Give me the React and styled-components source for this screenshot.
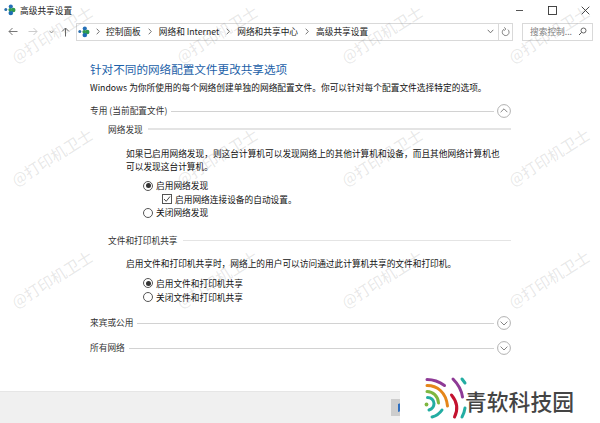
import React from 'react';
import styled, { createGlobalStyle } from 'styled-components';

const GlobalStyle = createGlobalStyle`
  html, body {
    margin: 0;
    padding: 0;
    background: #fff;
  }
  * {
    box-sizing: border-box;
  }
`;

const Window = styled.div`
  position: relative;
  width: 600px;
  height: 423px;
  overflow: hidden;
  background: #fff;
  color: #1a1a1a;
  font-family: "Noto Sans CJK SC", "Noto Sans", sans-serif;
  font-size: 8.7px;
  display: flex;
  flex-direction: column;
`;

const TitleBar = styled.div`
  height: 20px;
  display: flex;
  align-items: center;
  padding: 0 0 0 4px;
`;

const WindowTitle = styled.span`
  margin-left: 4px;
  font-size: 8.7px;
  color: #222;
`;

const WindowButtons = styled.div`
  margin-left: auto;
  margin-right: -2px;
  display: flex;
  align-items: center;
`;

const WindowButton = styled.div`
  width: 33px;
  height: 18px;
  display: flex;
  align-items: center;
  justify-content: center;
`;

const NavBar = styled.div`
  height: 21px;
  margin-top: 1px;
  display: flex;
  align-items: center;
  padding-left: 7px;
`;

const NavIcon = styled.div`
  width: ${p => p.$w}px;
  height: 20px;
  display: flex;
  align-items: center;
  justify-content: center;
`;

const AddressBox = styled.div`
  width: 437px;
  height: 18px;
  border: 1px solid #d9d9d9;
  display: flex;
  align-items: center;
  padding-left: 1px;
`;

const Crumb = styled.span`
  color: #222;
  white-space: nowrap;
`;

const CrumbSep = styled.span`
  width: ${p => p.$w || 18}px;
  display: flex;
  justify-content: center;
`;

const AddressRight = styled.div`
  margin-left: auto;
  display: flex;
  align-items: center;
  height: 100%;
`;

const AddressButton = styled.div`
  width: ${p => p.$w}px;
  height: 100%;
  display: flex;
  align-items: center;
  justify-content: center;
  border-left: ${p => (p.$divider ? '1px solid #d9d9d9' : 'none')};
`;

const SearchBox = styled.div`
  margin-left: 9px;
  width: 71px;
  height: 18px;
  border: 1px solid #d9d9d9;
  display: flex;
  align-items: center;
  justify-content: space-between;
  padding: 0 5px 0 7px;
  color: #808080;
`;

const Content = styled.div`
  flex: 1;
  padding: 17px 0 0 90px;
`;

const MainHeading = styled.div`
  color: #1c5fa8;
  font-size: 11.6px;
  line-height: 20px;
`;

const Intro = styled.div`
  margin-top: 2px;
  line-height: 14px;
  white-space: nowrap;
  color: #111;
  letter-spacing: 0.03px;
`;

const SectionRow = styled.div`
  display: flex;
  align-items: center;
  height: 20px;
  width: 421px;
  margin-top: ${p => p.$top}px;
`;

const SectionLabel = styled.span`
  white-space: nowrap;
  color: #333;
  margin: 0 4px 2px 0;
`;

const SectionLine = styled.div`
  flex: 1;
  height: 1px;
  background: #d2d2d2;
`;

const Chevron = styled.div`
  width: 14px;
  height: 14px;
  margin-left: 3px;
  flex: none;
`;

const GroupRow = styled.div`
  display: flex;
  align-items: center;
  height: 14px;
  width: 403px;
  margin: ${p => p.$top}px 0 0 18px;
`;

const GroupLabel = styled.span`
  white-space: nowrap;
  color: #333;
  margin-right: 5px;
`;

const GroupLine = styled.div`
  flex: 1;
  height: 1.5px;
  background: #e4e4e4;
`;

const Para = styled.div`
  margin: ${p => p.$top}px 0 0 36px;
  line-height: 13px;
  width: 380px;
  color: #111;
`;

const Options = styled.div`
  margin: ${p => p.$top}px 0 0 53px;
  display: flex;
  flex-direction: column;
`;

const Option = styled.div`
  height: ${p => p.$h || 13.5}px;
  display: flex;
  align-items: center;
  gap: 3px;
  white-space: nowrap;
  color: #111;
  margin-left: ${p => (p.$nested ? 19 : 0)}px;
`;

const Radio = styled.span`
  width: 10px;
  height: 10px;
  border: 1px solid #555;
  border-radius: 50%;
  display: flex;
  align-items: center;
  justify-content: center;
  flex: none;
  &::after {
    content: '';
    display: ${p => (p.$on ? 'block' : 'none')};
    width: 5px;
    height: 5px;
    border-radius: 50%;
    background: #333;
  }
`;

const Check = styled.span`
  width: 10px;
  height: 10px;
  border: 1px solid #555;
  display: flex;
  align-items: center;
  justify-content: center;
  flex: none;
`;

const FooterBar = styled.div`
  height: 32px;
  background: #f0f0f0;
  border-top: 1px solid #e6e6e6;
  display: flex;
  align-items: center;
  justify-content: flex-end;
  padding-right: 190px;
`;

const ShieldButton = styled.div`
  width: 19px;
  height: 17px;
  background: #cdcdcd;
  display: flex;
  align-items: center;
  padding-left: 7px;
`;

const Watermark = styled.div`
  position: absolute;
  left: ${p => p.$x}px;
  top: ${p => p.$y}px;
  color: rgba(120, 120, 120, 0.18);
  font-size: 15.5px;
  line-height: 23px;
  white-space: nowrap;
  transform: rotate(-32deg);
  transform-origin: left bottom;
  pointer-events: none;
`;

const LogoArea = styled.div`
  position: absolute;
  left: 400px;
  bottom: 0;
  width: 200px;
  height: 47px;
  background: #fff;
  display: flex;
  align-items: flex-end;
`;

const LogoMark = styled.svg`
  margin-left: 24px;
  margin-bottom: 3px;
  flex: none;
`;

const LogoText = styled.span`
  margin-left: -3px;
  margin-bottom: 7px;
  font-size: 21.8px;
  font-weight: 500;
  line-height: 30px;
  color: #444;
  white-space: nowrap;
`;

const NetworkIcon = () => (
  <svg width="12" height="12" viewBox="0 0 12 12">
    <circle cx="1.8" cy="5.5" r="1.5" fill="#2b6fb0" />
    <circle cx="6.8" cy="2.6" r="2.1" fill="#2470b8" />
    <circle cx="9.3" cy="6" r="2.2" fill="#2f9a4e" />
    <circle cx="6.8" cy="9" r="2.3" fill="#1d6cb5" />
    <circle cx="6.2" cy="5.7" r="1.8" fill="#2f9a4e" />
  </svg>
);

const Sep = () => (
  <svg width="4" height="7" viewBox="0 0 4 7">
    <path d="M0.7 0.7 L3.3 3.5 L0.7 6.3" fill="none" stroke="#666" strokeWidth="0.9" />
  </svg>
);

const CircleChevron = ({ up }) => (
  <svg width="14" height="14" viewBox="0 0 14 14">
    <circle cx="7" cy="7" r="6.4" fill="#fff" stroke="#a8a8a8" strokeWidth="0.9" />
    <path d={up ? 'M3.6 8.2 L7 4.8 L10.4 8.2' : 'M3.6 5.6 L7 9 L10.4 5.6'} fill="none" stroke="#777" strokeWidth="0.9" />
  </svg>
);

const markColumns = [19, 184, 349, 516];
const markRows = [45, 168, 290];

const App = () => (
  <Window>
    <GlobalStyle />
    <TitleBar>
      <NetworkIcon />
      <WindowTitle>高级共享设置</WindowTitle>
      <WindowButtons>
        <WindowButton>
          <svg width="9" height="9" viewBox="0 0 9 9"><path d="M1 4.5 H8" stroke="#555" strokeWidth="1" /></svg>
        </WindowButton>
        <WindowButton>
          <svg width="9" height="9" viewBox="0 0 9 9"><rect x="0.5" y="0.5" width="8" height="8" fill="none" stroke="#333" strokeWidth="0.9" /></svg>
        </WindowButton>
        <WindowButton>
          <svg width="9" height="9" viewBox="0 0 9 9"><path d="M0.7 0.7 L8.3 8.3 M8.3 0.7 L0.7 8.3" stroke="#333" strokeWidth="0.9" /></svg>
        </WindowButton>
      </WindowButtons>
    </TitleBar>

    <NavBar>
      <NavIcon $w={11}>
        <svg width="10" height="9" viewBox="0 0 10 9"><path d="M9.5 4.5 H1 M4.5 1 L1 4.5 L4.5 8" fill="none" stroke="#777" strokeWidth="1" /></svg>
      </NavIcon>
      <NavIcon $w={30}>
        <svg width="10" height="9" viewBox="0 0 10 9"><path d="M0.5 4.5 H9 M5.5 1 L9 4.5 L5.5 8" fill="none" stroke="#ccc" strokeWidth="1" /></svg>
      </NavIcon>
      <NavIcon $w={6}>
        <svg width="5" height="4" viewBox="0 0 5 4"><path d="M0.5 0.8 L2.5 3 L4.5 0.8" fill="none" stroke="#777" strokeWidth="0.8" /></svg>
      </NavIcon>
      <NavIcon $w={22}>
        <svg width="9" height="10" viewBox="0 0 9 10"><path d="M4.5 9.5 V1 M1 4.5 L4.5 1 L8 4.5" fill="none" stroke="#666" strokeWidth="1" /></svg>
      </NavIcon>
      <AddressBox>
        <NetworkIcon />
        <CrumbSep $w={16}><Sep /></CrumbSep>
        <Crumb>控制面板</Crumb>
        <CrumbSep><Sep /></CrumbSep>
        <Crumb>网络和 Internet</Crumb>
        <CrumbSep><Sep /></CrumbSep>
        <Crumb>网络和共享中心</Crumb>
        <CrumbSep><Sep /></CrumbSep>
        <Crumb>高级共享设置</Crumb>
        <AddressRight>
          <AddressButton $w={16}>
            <svg width="7" height="5" viewBox="0 0 7 5"><path d="M0.7 0.8 L3.5 3.8 L6.3 0.8" fill="none" stroke="#666" strokeWidth="0.9" /></svg>
          </AddressButton>
          <AddressButton $w={14} $divider>
            <svg width="9" height="10" viewBox="0 0 9 10"><path d="M6.9 2.6 A3.4 3.4 0 1 1 3.2 2.1 M3.2 0.4 L4.9 2 L3.2 3.6" fill="none" stroke="#666" strokeWidth="0.8" /></svg>
          </AddressButton>
        </AddressRight>
      </AddressBox>
      <SearchBox>
        <span>搜索控制...</span>
        <svg width="9" height="9" viewBox="0 0 9 9"><circle cx="5.5" cy="3.5" r="2.5" fill="none" stroke="#555" strokeWidth="0.9" /><path d="M3.6 5.4 L1 8" stroke="#555" strokeWidth="1" /></svg>
      </SearchBox>
    </NavBar>

    <Content>
      <MainHeading>针对不同的网络配置文件更改共享选项</MainHeading>
      <Intro>Windows 为你所使用的每个网络创建单独的网络配置文件。你可以针对每个配置文件选择特定的选项。</Intro>

      <SectionRow $top={6}>
        <SectionLabel>专用 (当前配置文件)</SectionLabel>
        <SectionLine />
        <Chevron><CircleChevron up /></Chevron>
      </SectionRow>
      <GroupRow $top={1}>
        <GroupLabel>网络发现</GroupLabel>
        <GroupLine />
      </GroupRow>
      <Para $top={11}>如果已启用网络发现，则这台计算机可以发现网络上的其他计算机和设备，而且其他网络计算机也可以发现这台计算机。</Para>
      <Options $top={6}>
        <Option><Radio $on />启用网络发现</Option>
        <Option $nested>
          <Check>
            <svg width="8" height="8" viewBox="0 0 8 8"><path d="M1 4 L3.2 6.3 L7 1.5" fill="none" stroke="#333" strokeWidth="0.9" /></svg>
          </Check>
          启用网络连接设备的自动设置。
        </Option>
        <Option><Radio />关闭网络发现</Option>
      </Options>

      <GroupRow $top={14}>
        <GroupLabel>文件和打印机共享</GroupLabel>
        <GroupLine />
      </GroupRow>
      <Para $top={9}>启用文件和打印机共享时，网络上的用户可以访问通过此计算机共享的文件和打印机。</Para>
      <Options $top={6}>
        <Option $h={15}><Radio $on />启用文件和打印机共享</Option>
        <Option><Radio />关闭文件和打印机共享</Option>
      </Options>

      <SectionRow $top={9}>
        <SectionLabel>来宾或公用</SectionLabel>
        <SectionLine />
        <Chevron><CircleChevron /></Chevron>
      </SectionRow>
      <SectionRow $top={5}>
        <SectionLabel>所有网络</SectionLabel>
        <SectionLine />
        <Chevron><CircleChevron /></Chevron>
      </SectionRow>
    </Content>

    <FooterBar>
      <ShieldButton>
        <svg width="3" height="9" viewBox="0 0 3 9"><path d="M0 1 L3 0 V8 L0 9 Z" fill="#2f6fc0" /></svg>
      </ShieldButton>
    </FooterBar>

    {markRows.map(y =>
      markColumns.map(x => (
        <Watermark key={`${x}-${y}`} $x={x} $y={y}>@打印机卫士</Watermark>
      ))
    )}

    <LogoArea>
      <LogoMark width="44" height="44" viewBox="0 0 44 44">
        <g fill="none" strokeWidth="3" strokeLinecap="round">
          <path d="M3 3.5 C9 3.5 15 5.5 20.5 9.5" stroke="#8e3a96" />
          <path d="M3 9.5 C13 9.5 22 16 23.5 30" stroke="#e5861a" />
          <path d="M3 15.5 C9 15.5 14 20 14.5 27" stroke="#7eb63f" />
          <path d="M3.5 21.5 C7 21.5 10 24 10 27.5 C10 30.5 8 33 5 34" stroke="#23ada2" />
          <path d="M8 41 C12 40 16 37 18 34" stroke="#23ada2" />
          <path d="M27.5 19 C32.5 25 34.5 33 30.5 41" stroke="#c4122f" />
          <path d="M29 3 C34 8 37.5 14 38.5 21" stroke="#8e3a96" />
          <path d="M38 3 L41 7" stroke="#23ada2" />
          <path d="M41 32 C40.5 35.5 39.5 38.5 38 41" stroke="#23ada2" />
        </g>
        <circle cx="2.5" cy="28.5" r="1.9" fill="#7eb63f" />
      </LogoMark>
      <LogoText>青软科技园</LogoText>
    </LogoArea>
  </Window>
);

export default App;
